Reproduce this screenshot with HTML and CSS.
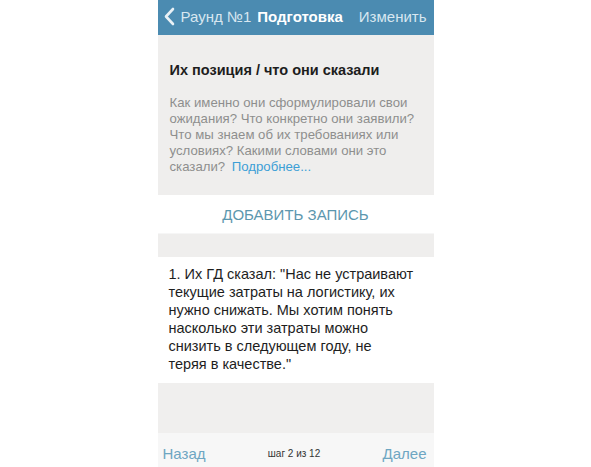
FILE: index.html
```html
<!DOCTYPE html>
<html lang="ru">
<head>
    <meta charset="UTF-8">
    <meta name="viewport" content="width=device-width, initial-scale=1.0">
    <title>Подготовка</title>
    <link rel="stylesheet" href="styles.css">
</head>
<body>
    <div class="screen">
        <!-- Навигация -->
        <header class="navbar">
            <a class="nav-back" href="#">
                <svg class="chevron" width="11" height="19" viewBox="0 0 11 19">
                    <path d="M9 2 L2 9.5 L9 17" fill="none" stroke="currentColor" stroke-width="2.6" stroke-linecap="round" stroke-linejoin="round"/>
                </svg>
                <span>Раунд №1</span>
            </a>
            <span class="nav-title">Подготовка</span>
            <a class="nav-action" href="#">Изменить</a>
        </header>

        <!-- Подсказка к шагу -->
        <section class="hint">
            <h2>Их позиция / что они сказали</h2>
            <p>Как именно они сформулировали свои ожидания? Что конкретно они заявили? Что мы знаем об их требованиях или условиях? Какими словами они это сказали? <a href="#">Подробнее...</a></p>
        </section>

        <button class="add-btn">ДОБАВИТЬ ЗАПИСЬ</button>

        <div class="spacer"></div>

        <!-- Записи -->
        <div class="entry">
            <p>1. Их ГД сказал: "Нас не устраивают текущие затраты на логистику, их нужно снижать. Мы хотим понять насколько эти затраты можно снизить в следующем году, не теряя в качестве."</p>
        </div>

        <div class="filler"></div>

        <footer class="toolbar">
            <a href="#">Назад</a>
            <span class="step">шаг 2 из 12</span>
            <a href="#">Далее</a>
        </footer>
    </div>
</body>
</html>
```

FILE: styles.css
```css
body {
    margin: 0;
    background-color: #fff;
    font-family: "Liberation Sans", Arial, sans-serif;
}
a {
    text-decoration: none;
}
.screen {
    width: 276px;
    height: 467px;
    margin: 0 auto;
    display: flex;
    flex-direction: column;
}
.navbar {
    height: 35px;
    background-color: #4b8bb1;
    color: #fff;
    display: flex;
    align-items: center;
    padding: 0 7px 3px 6px;
    box-sizing: border-box;
    font-size: 15px;
    white-space: nowrap;
}
.nav-back {
    display: flex;
    align-items: center;
    gap: 6px;
    color: #d8e7f0;
}
.chevron {
    color: #e9f1f6;
}
.nav-title {
    font-weight: bold;
    margin-left: 6px;
}
.nav-action {
    margin-left: auto;
    color: #d8e7f0;
}
.hint {
    background-color: #efeeed;
    padding: 27px 14px 20px 12px;
}
.hint h2 {
    margin: 0 0 17px;
    font-size: 14.5px;
    color: #1d1d1d;
}
.hint p {
    margin: 0;
    font-size: 13.2px;
    line-height: 16px;
    color: #8e8e8e;
}
.hint a {
    color: #3c9fd6;
    margin-left: 3px;
}
.add-btn {
    height: 38px;
    border: none;
    background-color: #fff;
    color: #5c97ae;
    font-family: inherit;
    font-size: 15px;
    padding: 0;
}
.spacer {
    height: 23px;
    background-color: #efeeed;
    border-top: 1px solid #f6f6f6;
}
.entry {
    background-color: #fff;
    padding: 8px 20px 10px 11px;
}
.entry p {
    margin: 0;
    font-size: 14.5px;
    line-height: 18px;
    color: #1e1e1e;
}
.filler {
    flex: 1;
    background-color: #f0efee;
}
.toolbar {
    height: 34px;
    box-sizing: border-box;
    background-color: #f7f7f7;
    display: flex;
    align-items: center;
    justify-content: space-between;
    padding: 6px 7px 0 5px;
}
.toolbar a {
    color: #6ea6c2;
    font-size: 15px;
}
.step {
    font-size: 10px;
    color: #333;
}
```
